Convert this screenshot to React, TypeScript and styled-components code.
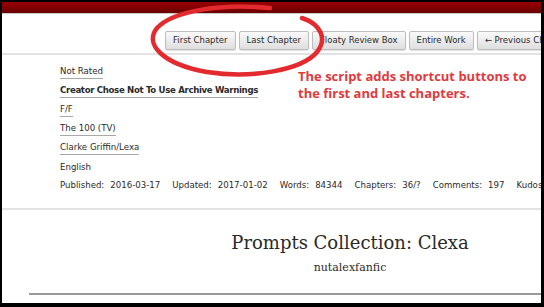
import styled, { createGlobalStyle } from "styled-components";

const Global = createGlobalStyle`
  html, body {
    margin: 0;
    padding: 0;
    background: #000;
    width: 544px;
    height: 307px;
    overflow: hidden;
  }
`;

const Frame = styled.div`
  position: relative;
  margin: 2px 3px 0 2px;
  height: 301px;
  background: #fff;
  overflow: hidden;
  font-family: "DejaVu Sans", sans-serif;
  color: #2a2a2a;
`;

const Header = styled.div`
  height: 11px;
  background: linear-gradient(#9a0000, #6a0000);
  border-bottom: 1px solid #c9c9c9;
`;

const Nav = styled.div`
  display: flex;
  gap: 3px;
  padding: 17px 0 3px 163px;
  height: 19px;
  white-space: nowrap;
  overflow: hidden;
  border-bottom: 2px solid #e2e2e2;
`;

const NavButton = styled.span`
  flex: none;
  height: 17px;
  line-height: 17px;
  padding: 0 7px;
  font-size: 8.5px;
  color: #2a2a2a;
  background: linear-gradient(#fafafa, #dedede);
  border: 1px solid #bdbdbd;
  border-radius: 2px;
  box-shadow: 0 1px 1px rgba(0, 0, 0, 0.12);
`;

const Meta = styled.dl`
  margin: 0;
  padding: 11px 0 0 58px;
  display: flex;
  flex-direction: column;
  gap: 6px;
  font-size: 8.6px;
  height: 142px;
  overflow: hidden;
  border-bottom: 2px solid #e2e2e2;
`;

const Tag = styled.dd<{ $bold?: boolean }>`
  margin: 0;
  align-self: flex-start;
  line-height: 11px;
  padding-bottom: 1px;
  font-weight: ${(p) => (p.$bold ? "bold" : "normal")};
  letter-spacing: ${(p) => (p.$bold ? "-0.33px" : "0")};
  border-bottom: 1px solid #a8a8a8;
`;

const Plain = styled.dd`
  margin: 0;
  line-height: 12px;
`;

const Stats = styled.div`
  display: flex;
  gap: 12px;
  white-space: nowrap;
  line-height: 12px;
`;

const Stat = styled.span`
  display: flex;
  gap: 6px;
`;

const Preface = styled.div`
  display: flex;
  flex-direction: column;
  align-items: center;
  padding: 22px 0 0 157px;
  height: 61px;
  font-family: "DejaVu Serif", Georgia, serif;
  color: #2a2a2a;
`;

const Title = styled.h2`
  margin: 0;
  font-weight: normal;
  font-size: 18px;
  line-height: 22px;
`;

const Byline = styled.div`
  font-size: 11px;
  margin-top: 7px;
`;

const Rule = styled.hr`
  margin: 0 0 0 27px;
  border: none;
  border-top: 2px solid #9a9a9a;
`;

const Note = styled.div`
  position: absolute;
  left: 296px;
  top: 66px;
  font-family: "Open Sans", sans-serif;
  font-weight: bold;
  font-size: 13px;
  line-height: 17px;
  color: #e03a3e;
`;

const Circle = styled.svg`
  position: absolute;
  left: 0;
  top: 0;
  pointer-events: none;
`;

const buttons = [
  "First Chapter",
  "Last Chapter",
  "Floaty Review Box",
  "Entire Work",
  "← Previous Chapter",
  "Next Chapter →",
];

const stats: [string, string][] = [
  ["Published:", "2016-03-17"],
  ["Updated:", "2017-01-02"],
  ["Words:", "84344"],
  ["Chapters:", "36/?"],
  ["Comments:", "197"],
  ["Kudos:", "1024"],
];

export default function App() {
  return (
    <>
      <Global />
      <Frame>
        <Header />
        <Nav>
          {buttons.map((b) => (
            <NavButton key={b}>{b}</NavButton>
          ))}
        </Nav>
        <Meta>
          <Tag>Not Rated</Tag>
          <Tag $bold>Creator Chose Not To Use Archive Warnings</Tag>
          <Tag>F/F</Tag>
          <Tag>The 100 (TV)</Tag>
          <Tag>Clarke Griffin/Lexa</Tag>
          <Plain>English</Plain>
          <Stats>
            {stats.map(([k, v]) => (
              <Stat key={k}>
                <span>{k}</span>
                <span>{v}</span>
              </Stat>
            ))}
          </Stats>
        </Meta>
        <Preface>
          <Title>Prompts Collection: Clexa</Title>
          <Byline>nutalexfanfic</Byline>
        </Preface>
        <Rule />
        <Note>
          The script adds shortcut buttons to
          <br />
          the first and last chapters.
        </Note>
        <Circle width="539" height="301" viewBox="0 0 539 301">
          <path
            d="M 268 6 C 215 1 170 10 155 26 C 142 42 160 62 205 70 C 250 77 300 68 315 50 C 326 36 318 22 300 16"
            fill="none"
            stroke="#e32a2e"
            strokeWidth="4.5"
            strokeLinecap="round"
          />
        </Circle>
      </Frame>
    </>
  );
}
